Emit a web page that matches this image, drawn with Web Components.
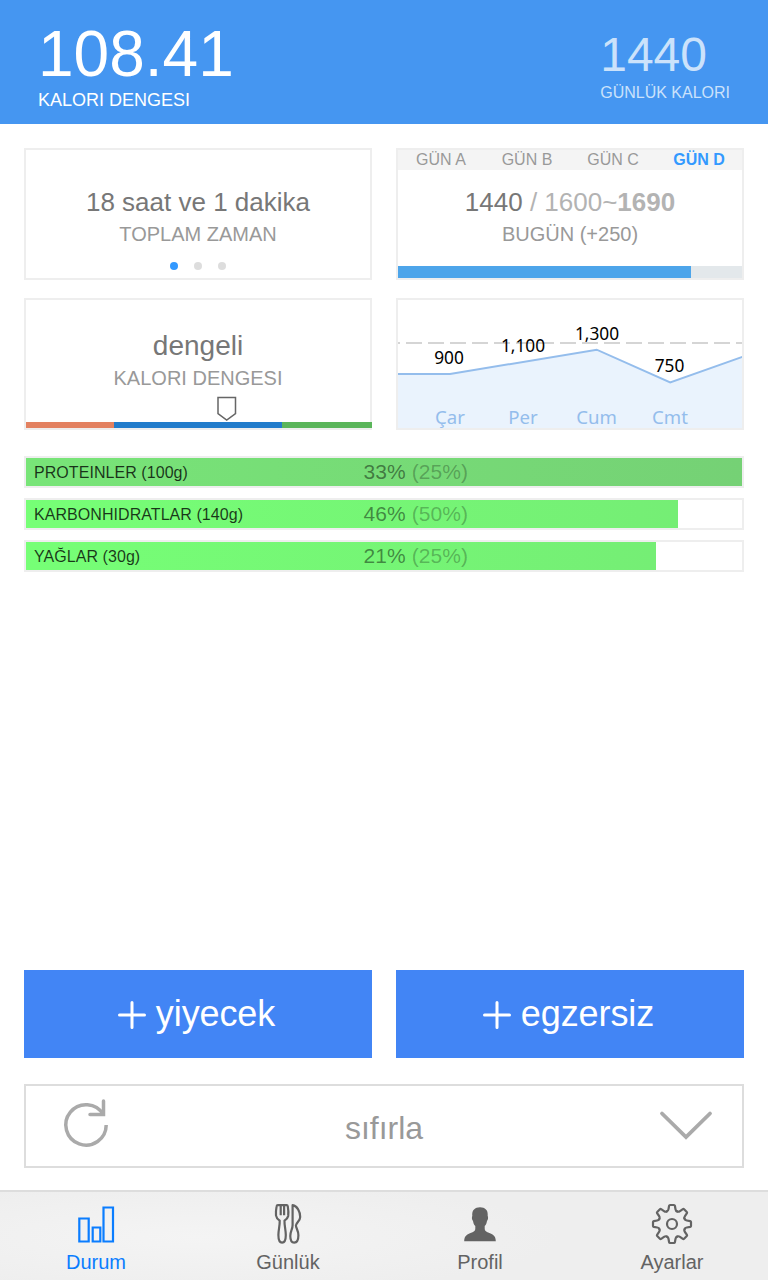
<!DOCTYPE html>
<html lang="tr">
<head>
<meta charset="utf-8">
<title>Durum</title>
<style>
html,body{margin:0;padding:0;background:#fff}
body{width:768px;height:1280px;overflow:hidden;font-family:"Liberation Sans",Arial,sans-serif}
</style>
</head>
<body>
<calorie-app></calorie-app>
<script>
const define = (name, css, html) => customElements.define(name, class extends HTMLElement {
  constructor() {
    super();
    const t = document.createElement('template');
    t.innerHTML = `<style>*{box-sizing:border-box}${css}</style>${html}`;
    this.attachShadow({mode: 'open'}).append(t.content.cloneNode(true));
  }
});

// One gear tooth, repeated every 45 degrees around the hub.
const gearTeeth = [0, 45, 90, 135, 180, 225, 270, 315].map(a =>
  `<path transform="translate(24 24) rotate(${a})" d="M-5.200-12.560Q-3.800-12.900-3.500-14.800L-2.900-18.200Q-2.700-19-1.900-19H1.900Q2.700-19 2.900-18.200L3.500-14.800Q3.800-12.900 5.200-12.560"/>`).join('');

define('stat-header', `
:host{display:flex;justify-content:space-between;height:124px;background:#4596f1;color:#fff;padding:0 38px}
.l{padding-top:22px}.r{padding-top:31px;color:#cbe2fb}
.big{font-size:64px;line-height:64px}.cap{font-size:18px;line-height:20px;margin-top:4px}
.r .big{font-size:48px;line-height:48px}.r .cap{font-size:16px;line-height:20px;margin-top:4px}`,
`<div class="l"><div class="big">108.41</div><div class="cap">KALORI DENGESI</div></div>
<div class="r"><div class="big">1440</div><div class="cap">GÜNLÜK KALORI</div></div>`);

define('info-card', `
:host{display:flex;flex-direction:column;box-sizing:border-box;height:132px;border:2px solid #eee;text-align:center;background:#fff;min-width:0}
.t{font-size:var(--title-size,26px);line-height:32px;color:#777;white-space:nowrap}
.s{font-size:20px;line-height:32px;color:#999;white-space:nowrap}
.g{flex:1}`,
`<slot name="top"></slot><div class="t"><slot name="title"></slot></div><div class="s"><slot name="sub"></slot></div><div class="g"></div><slot name="bottom"></slot>`);

define('page-dots', `
:host{display:flex;justify-content:center;gap:15.4px;height:16.3px}
i{width:8.6px;height:8.6px;border-radius:50%;background:#ddd}i:first-of-type{background:#39f}`,
`<i></i><i></i><i></i>`);

define('day-tabs', `
:host{display:grid;grid-template-columns:repeat(4,1fr);height:20px;margin-bottom:16px;background:#f4f4f4;color:#999;font-size:16px;line-height:20px}
b{color:#39f}`,
`<span>GÜN A</span><span>GÜN B</span><span>GÜN C</span><b>GÜN D</b>`);

define('day-progress', `
:host{display:block;height:12px;background:#e3e8eb}div{width:293px;height:12px;background:#4da5ea}`, `<div></div>`);

define('balance-scale', `
:host{display:block;width:346px;height:33px}svg{display:block}`,
`<svg width="346" height="33"><path d="M0 27h88v6H0z" fill="#e38160"/><path d="M88 27h168v6H88z" fill="#227ccb"/><path d="M256 27h90v6h-90z" fill="#5ab55a"/>
<path d="M192 2.500h17.500v16L200.700 25 192 18.500z" fill="#fff" stroke="#666" stroke-width="1.500"/></svg>`);

define('week-chart', `
:host{display:block;box-sizing:border-box;height:132px;border:2px solid #eee}svg{display:block;font-family:"Noto Sans",sans-serif}`,
`<svg width="344" height="128" text-anchor="middle">
<path d="M-14 43H344" stroke="#d5d5d5" stroke-width="2" stroke-dasharray="16 6"/>
<path d="M0 74H52L198.700 49.700 272.200 82.500 344 57V128H0z" fill="#eaf3fd"/>
<path d="M-2 74H52L198.700 49.700 272.200 82.500 346 56.300" fill="none" stroke="#94bdec" stroke-width="2"/>
<g font-size="17.300" fill="#000"><text x="51" y="64">900</text><text x="125" y="52">1,100</text><text x="199" y="40">1,300</text><text x="271.500" y="72">750</text></g>
<g font-size="18.600" fill="#94bdec"><text x="52" y="124">Çar</text><text x="125" y="124">Per</text><text x="198.500" y="124">Cum</text><text x="272" y="124">Cmt</text></g>
</svg>`);

define('macro-bar', `
:host{display:grid;box-sizing:border-box;height:32px;border:2px solid #eee}
.f,.x{grid-area:1/1}
.f{height:28px;width:var(--fill);background:var(--paint)}
.x{display:flex;line-height:28px;color:#000}
.n{font-size:16px;letter-spacing:.06px;padding-left:8px;width:337.500px;color:rgba(0,0,0,.78);white-space:nowrap;padding-top:.5px}
.p{font-size:21px;letter-spacing:.08px;color:rgba(0,0,0,.46);white-space:nowrap}.p span{color:rgba(0,0,0,.27)}`,
`<div class="f"></div><div class="x"><div class="n"><slot></slot></div><div class="p"><slot name="now"></slot> <span><slot name="goal"></slot></span></div></div>`);

define('add-button', `
:host{display:flex;align-items:center;justify-content:center;box-sizing:border-box;padding-right:3px;height:88px;background:#4285f5;color:#fff;font-size:36px;letter-spacing:-.1px;gap:10px}svg{display:block;margin-top:2px}`,
`<svg width="28" height="28" stroke="#fff" stroke-width="3" stroke-linecap="round"><path d="M14 1.500v25M1.500 14h25"/></svg><slot></slot>`);

define('reset-bar', `
:host{display:grid;grid-template-columns:120px 1fr 120px;box-sizing:border-box;height:84px;border:2px solid #ddd;align-items:center;text-align:center;font-size:32px;line-height:36px;color:#999}
svg{display:block}.t{padding-top:3px}`,
`<svg width="120" height="80" fill="none" stroke="#aaa" stroke-width="3.500"><path d="M80.200 39a20.200 20.200 0 1 1-2.900-10.500"/><path d="M77.500 15v13.500H64" stroke-linecap="round"/></svg>
<div class="t"><slot></slot></div>
<svg width="120" height="80" fill="none" stroke="#aaa" stroke-width="3.800" stroke-linecap="round"><path d="M40 27.500 64 51 88 27.500"/></svg>`);

define('nav-item', `
:host{display:flex;flex-direction:column;align-items:center;color:#636363;font-size:20px;line-height:24px;padding-top:8px}
::slotted(svg){display:block;width:48px;height:50px;fill:none;stroke:currentColor;stroke-width:2.200}`,
`<slot name="icon"></slot><div><slot></slot></div>`);

define('nav-bar', `
:host{display:grid;grid-template-columns:repeat(4,1fr);box-sizing:border-box;height:90px;border-top:2px solid #ddd;background:radial-gradient(ellipse 360px 56px at 200px 45px,#f4f4f4,#eee)}
.on{color:#0a7dff}`,
`<nav-item class="on"><svg slot="icon" viewBox="0 0 48 50"><path d="M7.300 18.500h9.400v23H7.300zM20.700 27.500h7.600v14h-7.600zM31.500 7.500h9.500v34h-9.500z"/></svg>Durum</nav-item>
<nav-item><svg slot="icon" viewBox="0 0 48 50" stroke-linejoin="round"><path d="M13.800 5.200h8.800q1 0 1.200 1.200.9 5.500.4 9.600-.5 2.500-3.700 4.700c-.2 4.800 1.300 9.300 1.300 14.300 0 5-1.600 7.600-3.700 7.600s-3.700-2.600-3.700-7.600c0-5 1.500-9.500 1.300-14.300-2.600-2-3.500-3.200-3.700-5.200q-.3-4.600.6-9.100.2-1.200 1.200-1.200zM16.700 5.200v10M20.100 5.200v10M28.600 5.200c4.600.8 7.600 6.200 7.600 11.800 0 4-4 5.500-4.300 8.500.2 3 2.500 5 2.500 9.800 0 4.800-2 7.300-4.200 7.300s-3.900-2.500-3.900-6.600c0-5 2.300-6.500 2.300-11z"/></svg>Günlük</nav-item>
<nav-item><svg slot="icon" viewBox="0 0 48 50"><path stroke="none" fill="#636363" d="M8.200 41.200c0-5.300 2.800-7.200 8.300-9 2-.8 2.800-1.600 2.800-3.600v-2.500c-1.500-1.600-2-3.400-2.300-5.200-1.300-1.300-1.300-4-.7-5C15.700 10 19 7.200 24 7.200s8.300 2.800 7.700 8.700c.6 1 .6 3.700-.7 5-.3 1.800-.8 3.600-2.300 5.200v2.500c0 2 .8 2.800 2.800 3.600 5.500 1.800 8.300 3.700 8.300 9z"/></svg>Profil</nav-item>
<nav-item><svg slot="icon" viewBox="0 0 48 50" stroke-linecap="round"><circle cx="24" cy="24" r="5"/>${gearTeeth}</svg>Ayarlar</nav-item>`);

define('calorie-app', `
:host{display:flex;flex-direction:column;width:768px;height:1280px}
.cards{display:grid;grid-template-columns:348px 348px;gap:18px 24px;padding:24px 24px 26px}
.time{padding-top:36px}.bal{padding-top:30px;--title-size:28px}
.k{color:#b3b3b3}
.macros{display:flex;flex-direction:column;gap:10px;padding:0 24px}
.space{flex:1}
.add{display:grid;grid-template-columns:348px 348px;gap:24px;padding:0 24px 26px}
reset-bar{margin:0 24px 22px}
.m1{--fill:716px;--paint:linear-gradient(90deg,#78e578,#75d175)}
.m2{--fill:652px;--paint:linear-gradient(90deg,#76ff76,#75ee75)}
.m3{--fill:630px;--paint:linear-gradient(90deg,#76ff76,#75ee75)}`,
`<stat-header></stat-header>
<div class="cards">
<info-card class="time"><span slot="title">18 saat ve 1 dakika</span><span slot="sub">TOPLAM ZAMAN</span><page-dots slot="bottom"></page-dots></info-card>
<info-card><day-tabs slot="top"></day-tabs><span slot="title">1440 <span class="k">/ 1600~<b>1690</b></span></span><span slot="sub">BUGÜN (+250)</span><day-progress slot="bottom"></day-progress></info-card>
<info-card class="bal"><span slot="title">dengeli</span><span slot="sub">KALORI DENGESI</span><balance-scale slot="bottom"></balance-scale></info-card>
<week-chart></week-chart>
</div>
<div class="macros">
<macro-bar class="m1">PROTEINLER (100g)<span slot="now">33%</span><span slot="goal">(25%)</span></macro-bar>
<macro-bar class="m2">KARBONHIDRATLAR (140g)<span slot="now">46%</span><span slot="goal">(50%)</span></macro-bar>
<macro-bar class="m3">YAĞLAR (30g)<span slot="now">21%</span><span slot="goal">(25%)</span></macro-bar>
</div>
<div class="space"></div>
<div class="add"><add-button>yiyecek</add-button><add-button>egzersiz</add-button></div>
<reset-bar>sıfırla</reset-bar>
<nav-bar></nav-bar>`);
</script>
</body>
</html>
